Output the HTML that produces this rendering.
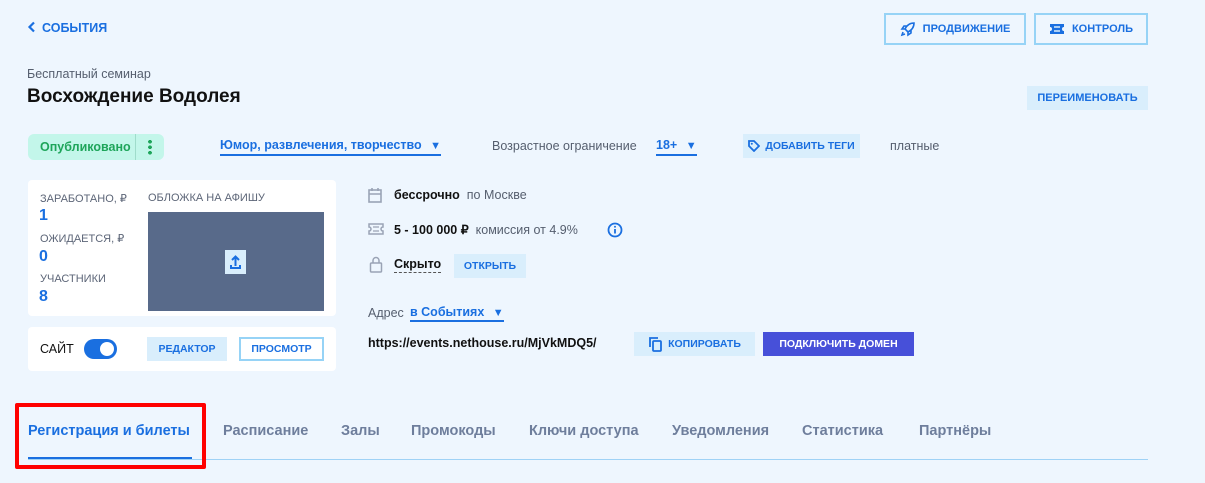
<!DOCTYPE html>
<html><head><meta charset="utf-8"><style>
*{box-sizing:border-box;margin:0;padding:0}
body{width:1205px;height:483px;background:#eef6fe;font-family:"Liberation Sans",sans-serif;position:relative;overflow:hidden;color:#111}
.a{position:absolute;white-space:nowrap}
.b{font-weight:bold}
.blue{color:#1a6fe0}
.cap{font-size:11px;font-weight:bold;display:flex;align-items:center;justify-content:center}
.btnl{background:#d9eefc;color:#1a6fe0}
.gray{color:#555e6e}
.lbl{font-size:11px;color:#5d6678}
.num{font-size:16px;font-weight:bold;color:#1a6fe0}
.tab{font-size:14.5px;font-weight:bold;color:#6e7e9c;top:423px}
</style></head><body>
<div class="a b blue" style="left:27px;top:21px;font-size:12.5px"><svg width="10" height="12" viewBox="0 0 10 12" style="vertical-align:-1px;margin-right:5px"><path d="M7 1.5L2.5 6 7 10.5" stroke="#1a6fe0" stroke-width="2.2" fill="none"/></svg>СОБЫТИЯ</div>

<div class="a cap blue" style="left:884px;top:13px;width:142px;height:32px;border:2px solid #96d3f6"><svg width="16" height="16" viewBox="0 0 16 16" style="margin-right:7px"><path d="M14 2c-4 0-7 2-9 6l3 3c4-2 6-5 6-9zM5 8H2l2-3h3M8 11v3l3-2V9M3 11l-1 3 3-1" stroke="#1a6fe0" stroke-width="1.6" fill="none"/></svg>ПРОДВИЖЕНИЕ</div>
<div class="a cap blue" style="left:1034px;top:13px;width:114px;height:32px;border:2px solid #96d3f6"><svg width="16" height="12" viewBox="0 0 16 12" style="margin-right:7px"><path d="M1 1h14v3a2 2 0 0 0 0 4v3H1V8a2 2 0 0 0 0-4z" fill="#1a6fe0"/><path d="M5 4h6M5 8h6" stroke="#d9eefc" stroke-width="1.5"/></svg>КОНТРОЛЬ</div>

<div class="a" style="left:27px;top:67px;font-size:12.5px;color:#555e6e">Бесплатный семинар</div>
<div class="a b" style="left:27px;top:86px;font-size:19px">Восхождение Водолея</div>
<div class="a cap btnl" style="left:1027px;top:86px;width:121px;height:24px">ПЕРЕИМЕНОВАТЬ</div>

<div class="a" style="left:28px;top:134px;width:136px;height:26px;background:#c3f6ea;border-radius:6px"></div>
<div class="a b" style="left:40px;top:140px;font-size:12.5px;color:#1ea55a">Опубликовано</div>
<div class="a" style="left:135px;top:134px;width:1px;height:26px;background:#9fdccb"></div>
<div class="a" style="left:148px;top:139px;width:4px;height:16px;background:radial-gradient(circle,#1ea55a 1.8px,transparent 2px) 0 0/4px 5.5px"></div>

<div class="a b blue" style="left:220px;top:138px;font-size:12.5px;border-bottom:2px solid #1a6fe0;padding-bottom:2px">Юмор, развлечения, творчество <span style="font-size:11px;margin-left:5px">▼</span></div>
<div class="a gray" style="left:492px;top:139px;font-size:12.5px">Возрастное ограничение</div>
<div class="a b blue" style="left:656px;top:138px;font-size:12.5px;border-bottom:2px solid #1a6fe0;padding-bottom:2px">18+ <span style="font-size:11px;margin-left:5px">▼</span></div>
<div class="a cap btnl" style="left:743px;top:134px;width:117px;height:24px;font-size:10.5px"><svg width="12" height="12" viewBox="0 0 12 12" style="margin-right:5px"><path d="M1 1h5l5 5-5 5-5-5z" stroke="#1a6fe0" stroke-width="1.8" fill="none"/><circle cx="3.8" cy="3.8" r="1" fill="#1a6fe0"/></svg>ДОБАВИТЬ ТЕГИ</div>
<div class="a gray" style="left:890px;top:139px;font-size:12.5px">платные</div>

<div class="a" style="left:28px;top:180px;width:308px;height:136px;background:#fff;border-radius:4px"></div>
<div class="a lbl" style="left:40px;top:192px">ЗАРАБОТАНО, ₽</div>
<div class="a num" style="left:39px;top:207px">1</div>
<div class="a lbl" style="left:40px;top:232px">ОЖИДАЕТСЯ, ₽</div>
<div class="a num" style="left:39px;top:248px">0</div>
<div class="a lbl" style="left:40px;top:273px">УЧАСТНИКИ</div>
<div class="a num" style="left:39px;top:288px">8</div>
<div class="a lbl" style="left:148px;top:192px">ОБЛОЖКА НА АФИШУ</div>
<div class="a" style="left:148px;top:212px;width:176px;height:99px;background:#586a8a"></div>
<div class="a" style="left:225px;top:250px;width:21px;height:24px;background:#d9eefc"><svg width="21" height="24" viewBox="0 0 21 24"><path d="M10.5 16V7M7 10l3.5-3.5L14 10M6 15v3h9v-3" stroke="#1a6fe0" stroke-width="2" fill="none"/></svg></div>

<div class="a" style="left:28px;top:327px;width:308px;height:44px;background:#fff;border-radius:4px"></div>
<div class="a" style="left:40px;top:342px;font-size:12.5px">САЙТ</div>
<div class="a" style="left:84px;top:339px;width:33px;height:20px;background:#1a6fe0;border-radius:10px"><div style="position:absolute;right:3px;top:3px;width:14px;height:14px;border-radius:50%;background:#fff"></div></div>
<div class="a cap btnl" style="left:147px;top:337px;width:80px;height:24px;font-size:10.5px">РЕДАКТОР</div>
<div class="a cap blue" style="left:239px;top:337px;width:85px;height:24px;border:2px solid #96d3f6;font-size:10.5px">ПРОСМОТР</div>

<svg class="a" style="left:368px;top:187px" width="14" height="16" viewBox="0 0 14 16"><rect x="1" y="3" width="12" height="12" stroke="#9aa3b5" stroke-width="1.6" fill="none"/><path d="M1 7h12M4 1v3M10 1v3" stroke="#9aa3b5" stroke-width="1.6"/></svg>
<div class="a" style="left:394px;top:188px;font-size:12.5px"><b>бессрочно</b> <span class="gray">&nbsp;по Москве</span></div>
<svg class="a" style="left:368px;top:223px" width="16" height="12" viewBox="0 0 16 12"><path d="M1 1h14v3a2 2 0 0 0 0 4v3H1V8a2 2 0 0 0 0-4z" stroke="#9aa3b5" stroke-width="1.5" fill="none"/><path d="M5 4h6M5 8h6" stroke="#9aa3b5" stroke-width="1.2"/></svg>
<div class="a" style="left:394px;top:222px;font-size:12.5px"><b>5 - 100 000 ₽</b> <span class="gray">&nbsp;комиссия от 4.9%</span></div>
<svg class="a" style="left:607px;top:222px" width="16" height="16" viewBox="0 0 16 16"><circle cx="8" cy="8" r="6.5" stroke="#1a6fe0" stroke-width="1.8" fill="none"/><path d="M8 7v4.5" stroke="#1a6fe0" stroke-width="1.8"/><circle cx="8" cy="4.8" r="1" fill="#1a6fe0"/></svg>
<svg class="a" style="left:369px;top:256px" width="14" height="17" viewBox="0 0 14 17"><rect x="1.5" y="7" width="11" height="9" rx="1" stroke="#9aa3b5" stroke-width="1.5" fill="none"/><path d="M4 7V4.5a3 3 0 0 1 6 0V7" stroke="#9aa3b5" stroke-width="1.5" fill="none"/></svg>
<div class="a b" style="left:394px;top:257px;font-size:12.5px;border-bottom:1px dashed #555;padding-bottom:1px">Скрыто</div>
<div class="a cap btnl" style="left:454px;top:254px;width:72px;height:24px;font-size:10.5px">ОТКРЫТЬ</div>

<div class="a gray" style="left:368px;top:306px;font-size:12.5px">Адрес</div>
<div class="a b blue" style="left:410px;top:305px;font-size:12.5px;border-bottom:2px solid #1a6fe0;padding-bottom:1px">в Событиях <span style="font-size:11px;margin-left:5px">▼</span></div>
<div class="a b" style="left:368px;top:336px;font-size:12.5px">https://events.nethouse.ru/MjVkMDQ5/</div>
<div class="a cap btnl" style="left:634px;top:332px;width:121px;height:24px;font-size:10.5px"><svg width="14" height="16" viewBox="0 0 14 16" style="margin-right:6px"><path d="M2 11V2h8" stroke="#1a6fe0" stroke-width="1.8" fill="none"/><rect x="5" y="5" width="8" height="10" rx="1" stroke="#1a6fe0" stroke-width="1.8" fill="none"/></svg>КОПИРОВАТЬ</div>
<div class="a cap" style="left:763px;top:332px;width:151px;height:24px;background:#4750d9;color:#fff;font-size:10.5px">ПОДКЛЮЧИТЬ ДОМЕН</div>

<div class="a" style="left:28px;top:459px;width:1120px;height:1px;background:#9fd2f6"></div>
<div class="a tab" style="left:28px;color:#1a6fe0">Регистрация и билеты</div>
<div class="a" style="left:28px;top:457px;width:164px;height:2px;background:#1a6fe0"></div>
<div class="a tab" style="left:223px">Расписание</div>
<div class="a tab" style="left:341px">Залы</div>
<div class="a tab" style="left:411px">Промокоды</div>
<div class="a tab" style="left:529px">Ключи доступа</div>
<div class="a tab" style="left:672px">Уведомления</div>
<div class="a tab" style="left:802px">Статистика</div>
<div class="a tab" style="left:919px">Партнёры</div>
<div class="a" style="left:15px;top:403px;width:191px;height:66px;border:4px solid #f00;border-radius:2px"></div>
</body></html>
